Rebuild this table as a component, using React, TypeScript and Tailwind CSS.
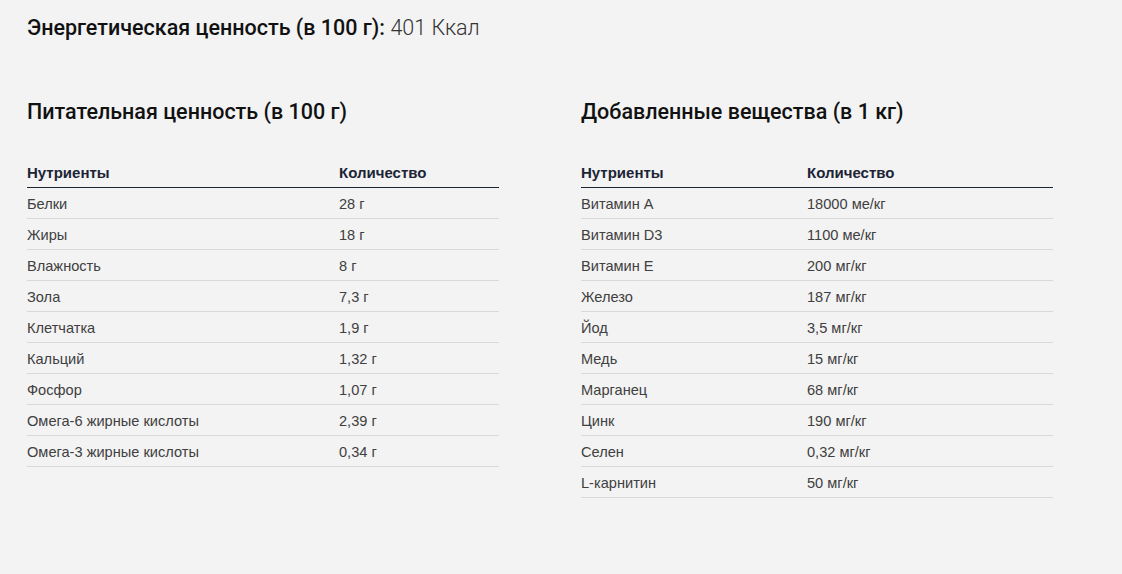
const nutrition: [string, string][] = [
  ["Белки", "28 г"],
  ["Жиры", "18 г"],
  ["Влажность", "8 г"],
  ["Зола", "7,3 г"],
  ["Клетчатка", "1,9 г"],
  ["Кальций", "1,32 г"],
  ["Фосфор", "1,07 г"],
  ["Омега-6 жирные кислоты", "2,39 г"],
  ["Омега-3 жирные кислоты", "0,34 г"],
];

const additives: [string, string][] = [
  ["Витамин A", "18000 ме/кг"],
  ["Витамин D3", "1100 ме/кг"],
  ["Витамин E", "200 мг/кг"],
  ["Железо", "187 мг/кг"],
  ["Йод", "3,5 мг/кг"],
  ["Медь", "15 мг/кг"],
  ["Марганец", "68 мг/кг"],
  ["Цинк", "190 мг/кг"],
  ["Селен", "0,32 мг/кг"],
  ["L-карнитин", "50 мг/кг"],
];

function NutrientTable({
  title,
  rows,
  firstCol,
}: {
  title: string;
  rows: [string, string][];
  firstCol: string;
}) {
  return (
    <section className="w-[472px]">
      <h2 className="font-['Roboto'] text-[21.5px] font-medium leading-[28px] text-[#111]">
        {title}
      </h2>
      <div className="mt-[34px] font-['Liberation_Sans']">
        <div className="flex h-[28px] items-center border-b border-[#1c2436] text-[15px] font-bold text-[#1c2436]">
          <span className={firstCol}>Нутриенты</span>
          <span>Количество</span>
        </div>
        {rows.map(([name, amount]) => (
          <div
            key={name}
            className="flex h-[31px] items-center border-b border-[#d9d9d9] pt-[3px] text-[14.6px] text-[#404040]"
          >
            <span className={firstCol}>{name}</span>
            <span>{amount}</span>
          </div>
        ))}
      </div>
    </section>
  );
}

export default function App() {
  return (
    <div className="min-h-[574px] bg-[#f3f3f3] pl-[27px] pt-[14px]">
      <p className="font-['Roboto'] text-[21.5px] leading-[28px] text-[#111]">
        <span className="font-medium">Энергетическая ценность (в 100 г):</span>{" "}
        <span className="font-light text-[#333]">401 Ккал</span>
      </p>
      <div className="mt-[56px] flex gap-[82px]">
        <NutrientTable
          title="Питательная ценность (в 100 г)"
          rows={nutrition}
          firstCol="w-[312px]"
        />
        <NutrientTable
          title="Добавленные вещества (в 1 кг)"
          rows={additives}
          firstCol="w-[226px]"
        />
      </div>
    </div>
  );
}
